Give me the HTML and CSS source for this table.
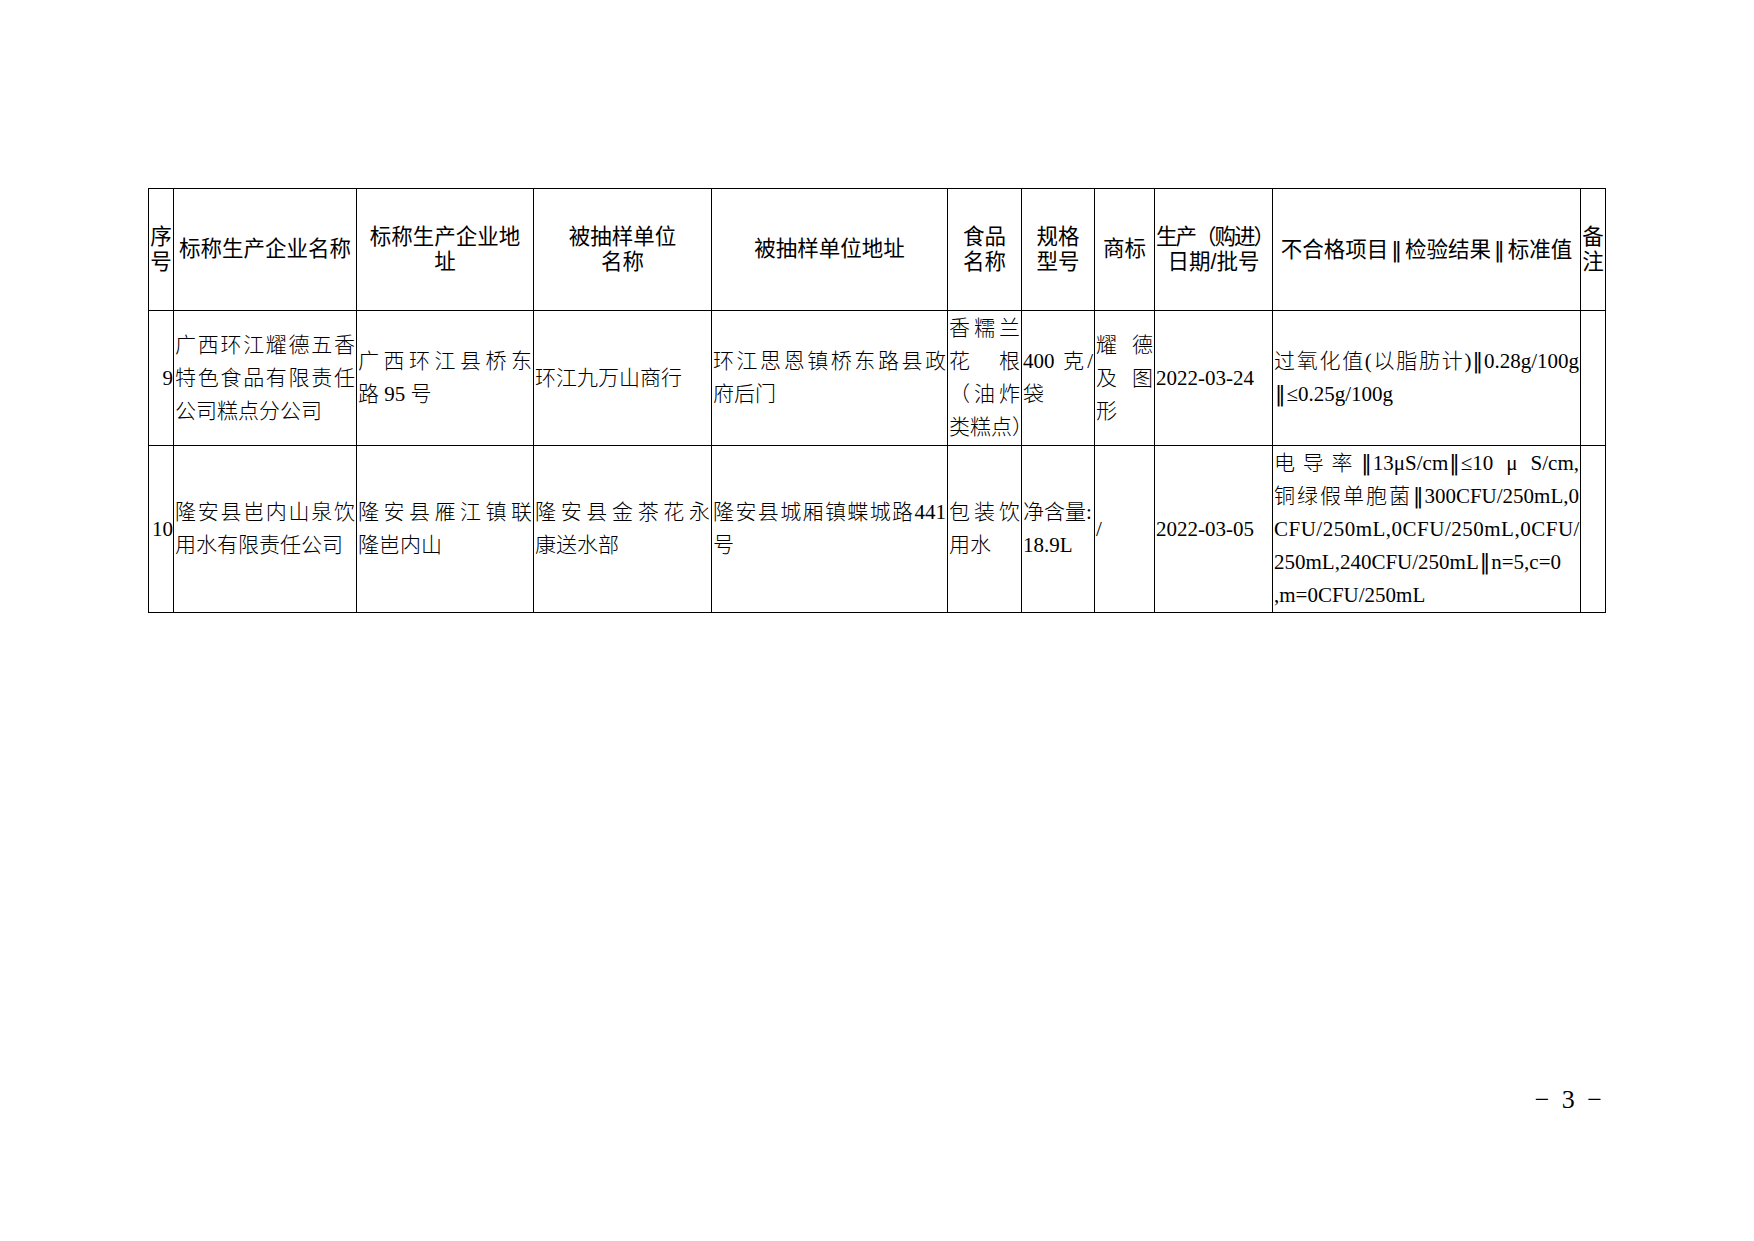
FILE: index.html
```html
<!DOCTYPE html>
<html lang="zh-CN">
<head>
<meta charset="utf-8">
<title>不合格产品信息</title>
<link rel="stylesheet" href="styles.css">
</head>
<body>
<div class="page">
  <table class="tbl">
    <colgroup>
      <col class="w-no"><col class="w-name"><col class="w-addr"><col class="w-unit"><col class="w-uaddr">
      <col class="w-food"><col class="w-spec"><col class="w-mark"><col class="w-date"><col class="w-item"><col class="w-note">
    </colgroup>
    <tr class="hd">
      <th>序<br>号</th>
      <th>标称生产企业名称</th>
      <th>标称生产企业地<br>址</th>
      <th>被抽样单位<br>名称</th>
      <th>被抽样单位地址</th>
      <th>食品<br>名称</th>
      <th>规格<br>型号</th>
      <th>商标</th>
      <th><span class="tight">生产（购进）</span><br>日期/批号</th>
      <th class="nw">不合格项目<span class="bar hbar">‖</span>检验结果<span class="bar hbar">‖</span>标准值</th>
      <th>备<br>注</th>
    </tr>
    <tr class="r9">
      <td class="num">9</td>
      <td><span class="l j">广西环江耀德五香</span><span class="l j">特色食品有限责任</span><span class="l">公司糕点分公司</span></td>
      <td><span class="l j">广西环江县桥东</span><span class="l">路 95 号</span></td>
      <td><span class="l">环江九万山商行</span></td>
      <td><span class="l j">环江思恩镇桥东路县政</span><span class="l">府后门</span></td>
      <td><span class="l j">香糯兰</span><span class="l j">花根</span><span class="l j">（油炸</span><span class="l nw">类糕点）</span></td>
      <td><span class="l j">400 克/</span><span class="l">袋</span></td>
      <td><span class="l j">耀德</span><span class="l j">及图</span><span class="l">形</span></td>
      <td><span class="l">2022-03-24</span></td>
      <td><span class="l j">过氧化值(以脂肪计)<span class="bar">‖</span>0.28g/100g</span><span class="l"><span class="bar">‖</span>≤0.25g/100g</span></td>
      <td></td>
    </tr>
    <tr class="r10">
      <td class="num">10</td>
      <td><span class="l j">隆安县岜内山泉饮</span><span class="l">用水有限责任公司</span></td>
      <td><span class="l j">隆安县雁江镇联</span><span class="l">隆岜内山</span></td>
      <td><span class="l j">隆安县金茶花永</span><span class="l">康送水部</span></td>
      <td><span class="l j">隆安县城厢镇蝶城路441</span><span class="l">号</span></td>
      <td><span class="l j">包装饮</span><span class="l">用水</span></td>
      <td><span class="l nw">净含量:</span><span class="l">18.9L</span></td>
      <td><span class="l">/</span></td>
      <td><span class="l">2022-03-05</span></td>
      <td>
        <span class="l j">电导率<span class="bar">‖</span>13μS/cm<span class="bar">‖</span>≤10 μ S/cm,</span>
        <span class="l j">铜绿假单胞菌<span class="bar">‖</span>300CFU/250mL,0</span>
        <span class="l j sp">CFU/250mL,0CFU/250mL,0CFU/</span>
        <span class="l j">250mL,240CFU/250mL<span class="bar">‖</span>n=5,c=0</span>
        <span class="l">,m=0CFU/250mL</span>
      </td>
      <td></td>
    </tr>
  </table>
  <div class="pageno">− 3 −</div>
</div>
</body>
</html>
```

FILE: styles.css
```css
html, body {
  margin: 0;
  padding: 0;
  background: #fff;
}

.page {
  width: 1754px;
  height: 1241px;
  box-sizing: border-box;
  padding: 188px 0 0 148px;
  overflow: hidden;
  color: #000;
}

.tbl {
  border-collapse: collapse;
  table-layout: fixed;
  width: 1457px;
}

.w-no { width: 25px; }
.w-name { width: 183px; }
.w-addr { width: 177px; }
.w-unit { width: 178px; }
.w-uaddr { width: 236px; }
.w-food { width: 74px; }
.w-spec { width: 73px; }
.w-mark { width: 60px; }
.w-date { width: 118px; }
.w-item { width: 308px; }
.w-note { width: 25px; }

.tbl th,
.tbl td {
  border: 1px solid #000;
  padding: 0 1px;
  vertical-align: middle;
  overflow: hidden;
}

.tbl th {
  font-family: "Liberation Sans", "Noto Sans CJK SC", sans-serif;
  font-weight: 400;
  font-size: 21.5px;
  line-height: 25px;
  text-align: center;
}

.tbl td {
  font-family: "Liberation Serif", "Noto Sans CJK SC", serif;
  font-weight: 300;
  font-size: 21px;
  line-height: 33px;
  text-align: left;
}

.hd { height: 122px; }
.r9 { height: 135px; }
.r10 { height: 167px; }

.tbl td.num {
  text-align: right;
  padding: 0;
}

.l {
  display: block;
}

.j {
  text-align: justify;
  text-align-last: justify;
}

.nw {
  white-space: nowrap;
}

.tight {
  letter-spacing: -2px;
  white-space: nowrap;
}

.sp {
  letter-spacing: 0.5px;
}

.bar {
  font-family: "DejaVu Sans", sans-serif;
  font-weight: 400;
  padding: 0 1px;
}

.hbar {
  padding: 0 3px;
}

.pageno {
  margin-top: 472px;
  padding-right: 152px;
  text-align: right;
  font-family: "Liberation Serif", serif;
  font-size: 26px;
  line-height: 30px;
  word-spacing: 6px;
}
```
